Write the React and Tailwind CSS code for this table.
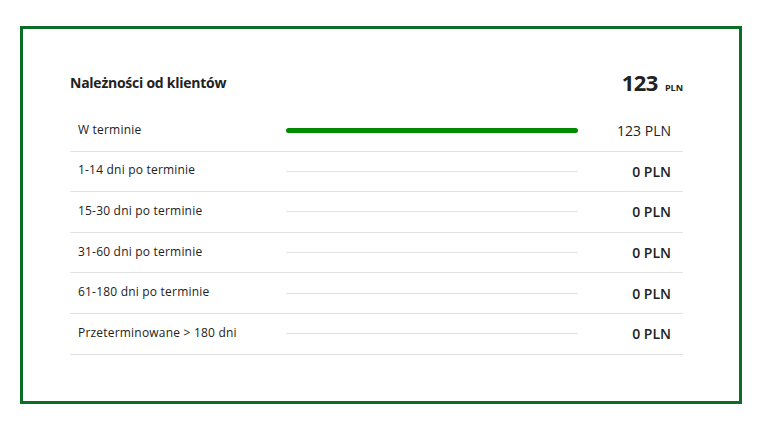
export default function App() {
  const rows = [
    { label: "W terminie", value: "123 PLN", pct: 100 },
    { label: "1-14 dni po terminie", value: "0 PLN", pct: 0 },
    { label: "15-30 dni po terminie", value: "0 PLN", pct: 0 },
    { label: "31-60 dni po terminie", value: "0 PLN", pct: 0 },
    { label: "61-180 dni po terminie", value: "0 PLN", pct: 0 },
    { label: "Przeterminowane > 180 dni", value: "0 PLN", pct: 0 },
  ];
  return (
    <div className="w-[765px] h-[425px] bg-white pt-[26px] pl-[20px] text-[#222]" style={{ fontFamily: '"Open Sans", "Liberation Sans", sans-serif' }}>
      <div className="w-[722px] h-[378px] border-[3px] border-[#0b6e24] pl-[47px] pt-[33px]">
        <div className="w-[613px]">
          <div className="h-[40px] flex items-center justify-between">
            <div className="text-[14px] font-bold tracking-[-0.25px]">Należności od klientów</div>
            <div className="flex items-baseline gap-[7px]">
              <span className="text-[22px] font-bold leading-none tracking-[-0.5px]">123</span>
              <span className="text-[9px] font-bold leading-none">PLN</span>
            </div>
          </div>
          <div className="mt-[9px]">
            {rows.map((r, i) => (
              <div key={i} className="h-[40.6px] border-b border-[#e2e2e2] flex items-center">
                <div className="w-[216px] pl-[8px] pb-[2px] text-[12px] tracking-[0.2px]">{r.label}</div>
                <div className="w-[292px] flex items-center">
                  {r.pct > 0 ? (
                    <div className="h-[5px] w-full rounded-full bg-[#008a00]" />
                  ) : (
                    <div className="h-px w-full bg-[#e2e2e2]" />
                  )}
                </div>
                <div className={"flex-1 text-right pr-[12px] text-[14px] " + (r.pct > 0 ? "font-medium" : "font-semibold")}>{r.value}</div>
              </div>
            ))}
          </div>
        </div>
      </div>
    </div>
  );
}
